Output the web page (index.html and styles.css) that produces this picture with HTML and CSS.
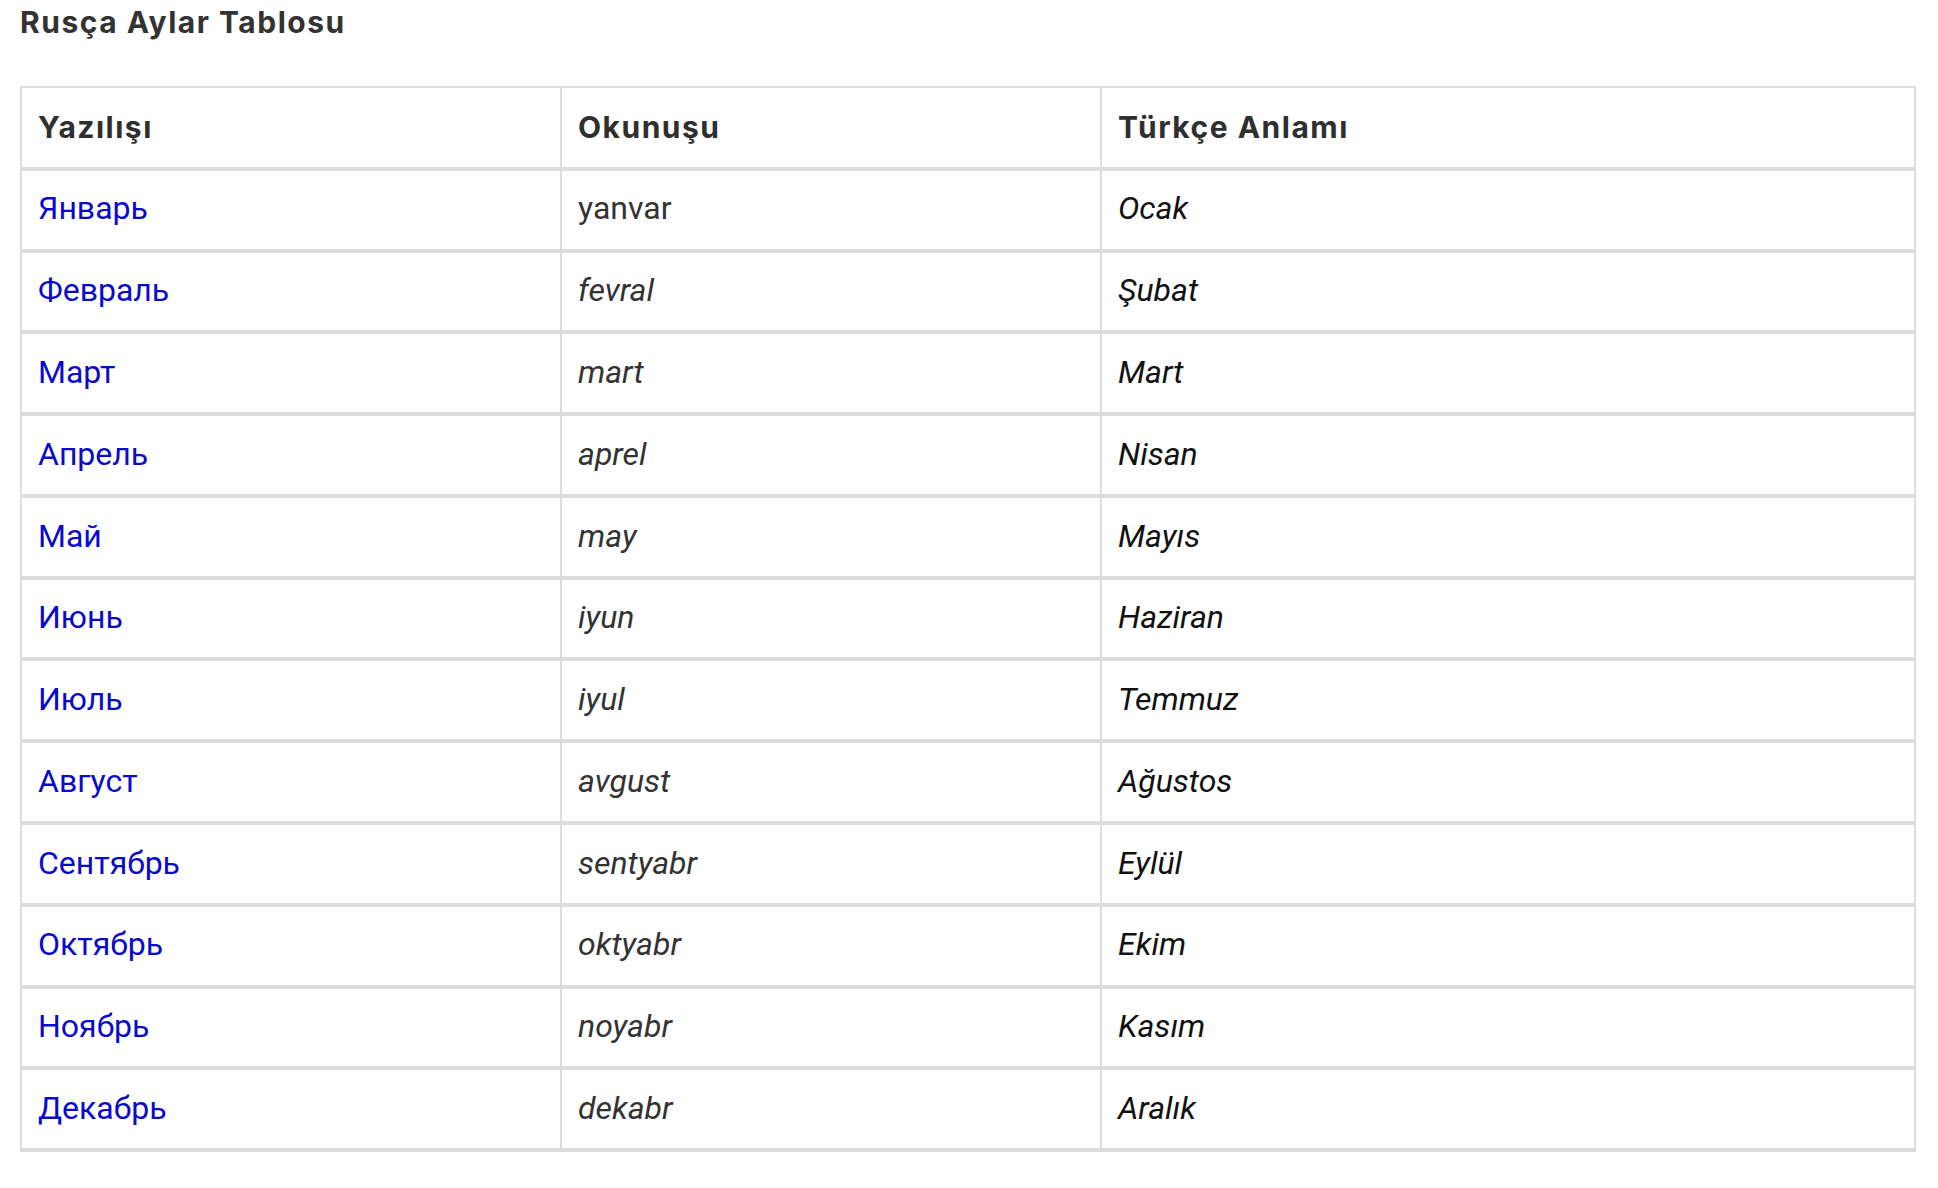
FILE: index.html
```html
<!DOCTYPE html>
<html lang="tr">
<head>
<meta charset="utf-8">
<title>Rusça Aylar Tablosu</title>
<link rel="stylesheet" href="styles.css">
</head>
<body>
<main class="page">
  <h3 class="title">Rusça Aylar Tablosu</h3>
  <table class="months">
    <colgroup>
      <col class="c1"><col class="c2"><col class="c3">
    </colgroup>
    <thead>
      <tr><th>Yazılışı</th><th>Okunuşu</th><th>Türkçe Anlamı</th></tr>
    </thead>
    <tbody>
      <tr><td><a href="#">Январь</a></td><td class="read upright">yanvar</td><td class="tr">Ocak</td></tr>
      <tr><td><a href="#">Февраль</a></td><td class="read">fevral</td><td class="tr">Şubat</td></tr>
      <tr><td><a href="#">Март</a></td><td class="read">mart</td><td class="tr">Mart</td></tr>
      <tr><td><a href="#">Апрель</a></td><td class="read">aprel</td><td class="tr">Nisan</td></tr>
      <tr><td><a href="#">Май</a></td><td class="read">may</td><td class="tr">Mayıs</td></tr>
      <tr><td><a href="#">Июнь</a></td><td class="read">iyun</td><td class="tr">Haziran</td></tr>
      <tr><td><a href="#">Июль</a></td><td class="read">iyul</td><td class="tr">Temmuz</td></tr>
      <tr><td><a href="#">Август</a></td><td class="read">avgust</td><td class="tr">Ağustos</td></tr>
      <tr><td><a href="#">Сентябрь</a></td><td class="read">sentyabr</td><td class="tr">Eylül</td></tr>
      <tr><td><a href="#">Октябрь</a></td><td class="read">oktyabr</td><td class="tr">Ekim</td></tr>
      <tr><td><a href="#">Ноябрь</a></td><td class="read">noyabr</td><td class="tr">Kasım</td></tr>
      <tr><td><a href="#">Декабрь</a></td><td class="read">dekabr</td><td class="tr">Aralık</td></tr>
    </tbody>
  </table>
</main>
</body>
</html>
```

FILE: styles.css
```css
html, body {
  margin: 0;
  padding: 0;
  background: #ffffff;
}

body {
  font-family: Roboto, "Liberation Sans", sans-serif;
  color: #333333;
}

.page {
  padding: 0 0 0 20px;
  width: 1896px;
}

.title {
  margin: 4px 0 0 0;
  font-family: Inter, "Liberation Sans", sans-serif;
  font-weight: 700;
  font-size: 30px;
  line-height: 36px;
  letter-spacing: 1.5px;
  color: #333333;
}

.months {
  margin-top: 46px;
  width: 1896px;
  table-layout: fixed;
  border-collapse: separate;
  border-spacing: 0;
  border-top: 2px solid #dedede;
  border-left: 2px solid #dedede;
}

.c1, .c2 { width: 540px; }
.c3 { width: 814px; }

.months th,
.months td {
  padding: 19.6px 16px 22.2px 16px;
  line-height: 36px;
  text-align: left;
  vertical-align: middle;
  border-right: 2px solid #dedede;
  border-bottom: 4px solid #dcdcdc;
}

.months th {
  padding-top: 21.4px;
  padding-bottom: 21.4px;
  font-family: Inter, "Liberation Sans", sans-serif;
  font-weight: 700;
  font-size: 30px;
  letter-spacing: 1.5px;
  color: #2f2f2f;
}

.months td {
  font-size: 32px;
  font-weight: 400;
}

.months a {
  color: #0a0acb;
  text-decoration: none;
}

.read {
  font-style: italic;
  color: #333333;
}

.read.upright {
  font-style: normal;
}

.tr {
  font-style: italic;
  color: #111111;
}
```
